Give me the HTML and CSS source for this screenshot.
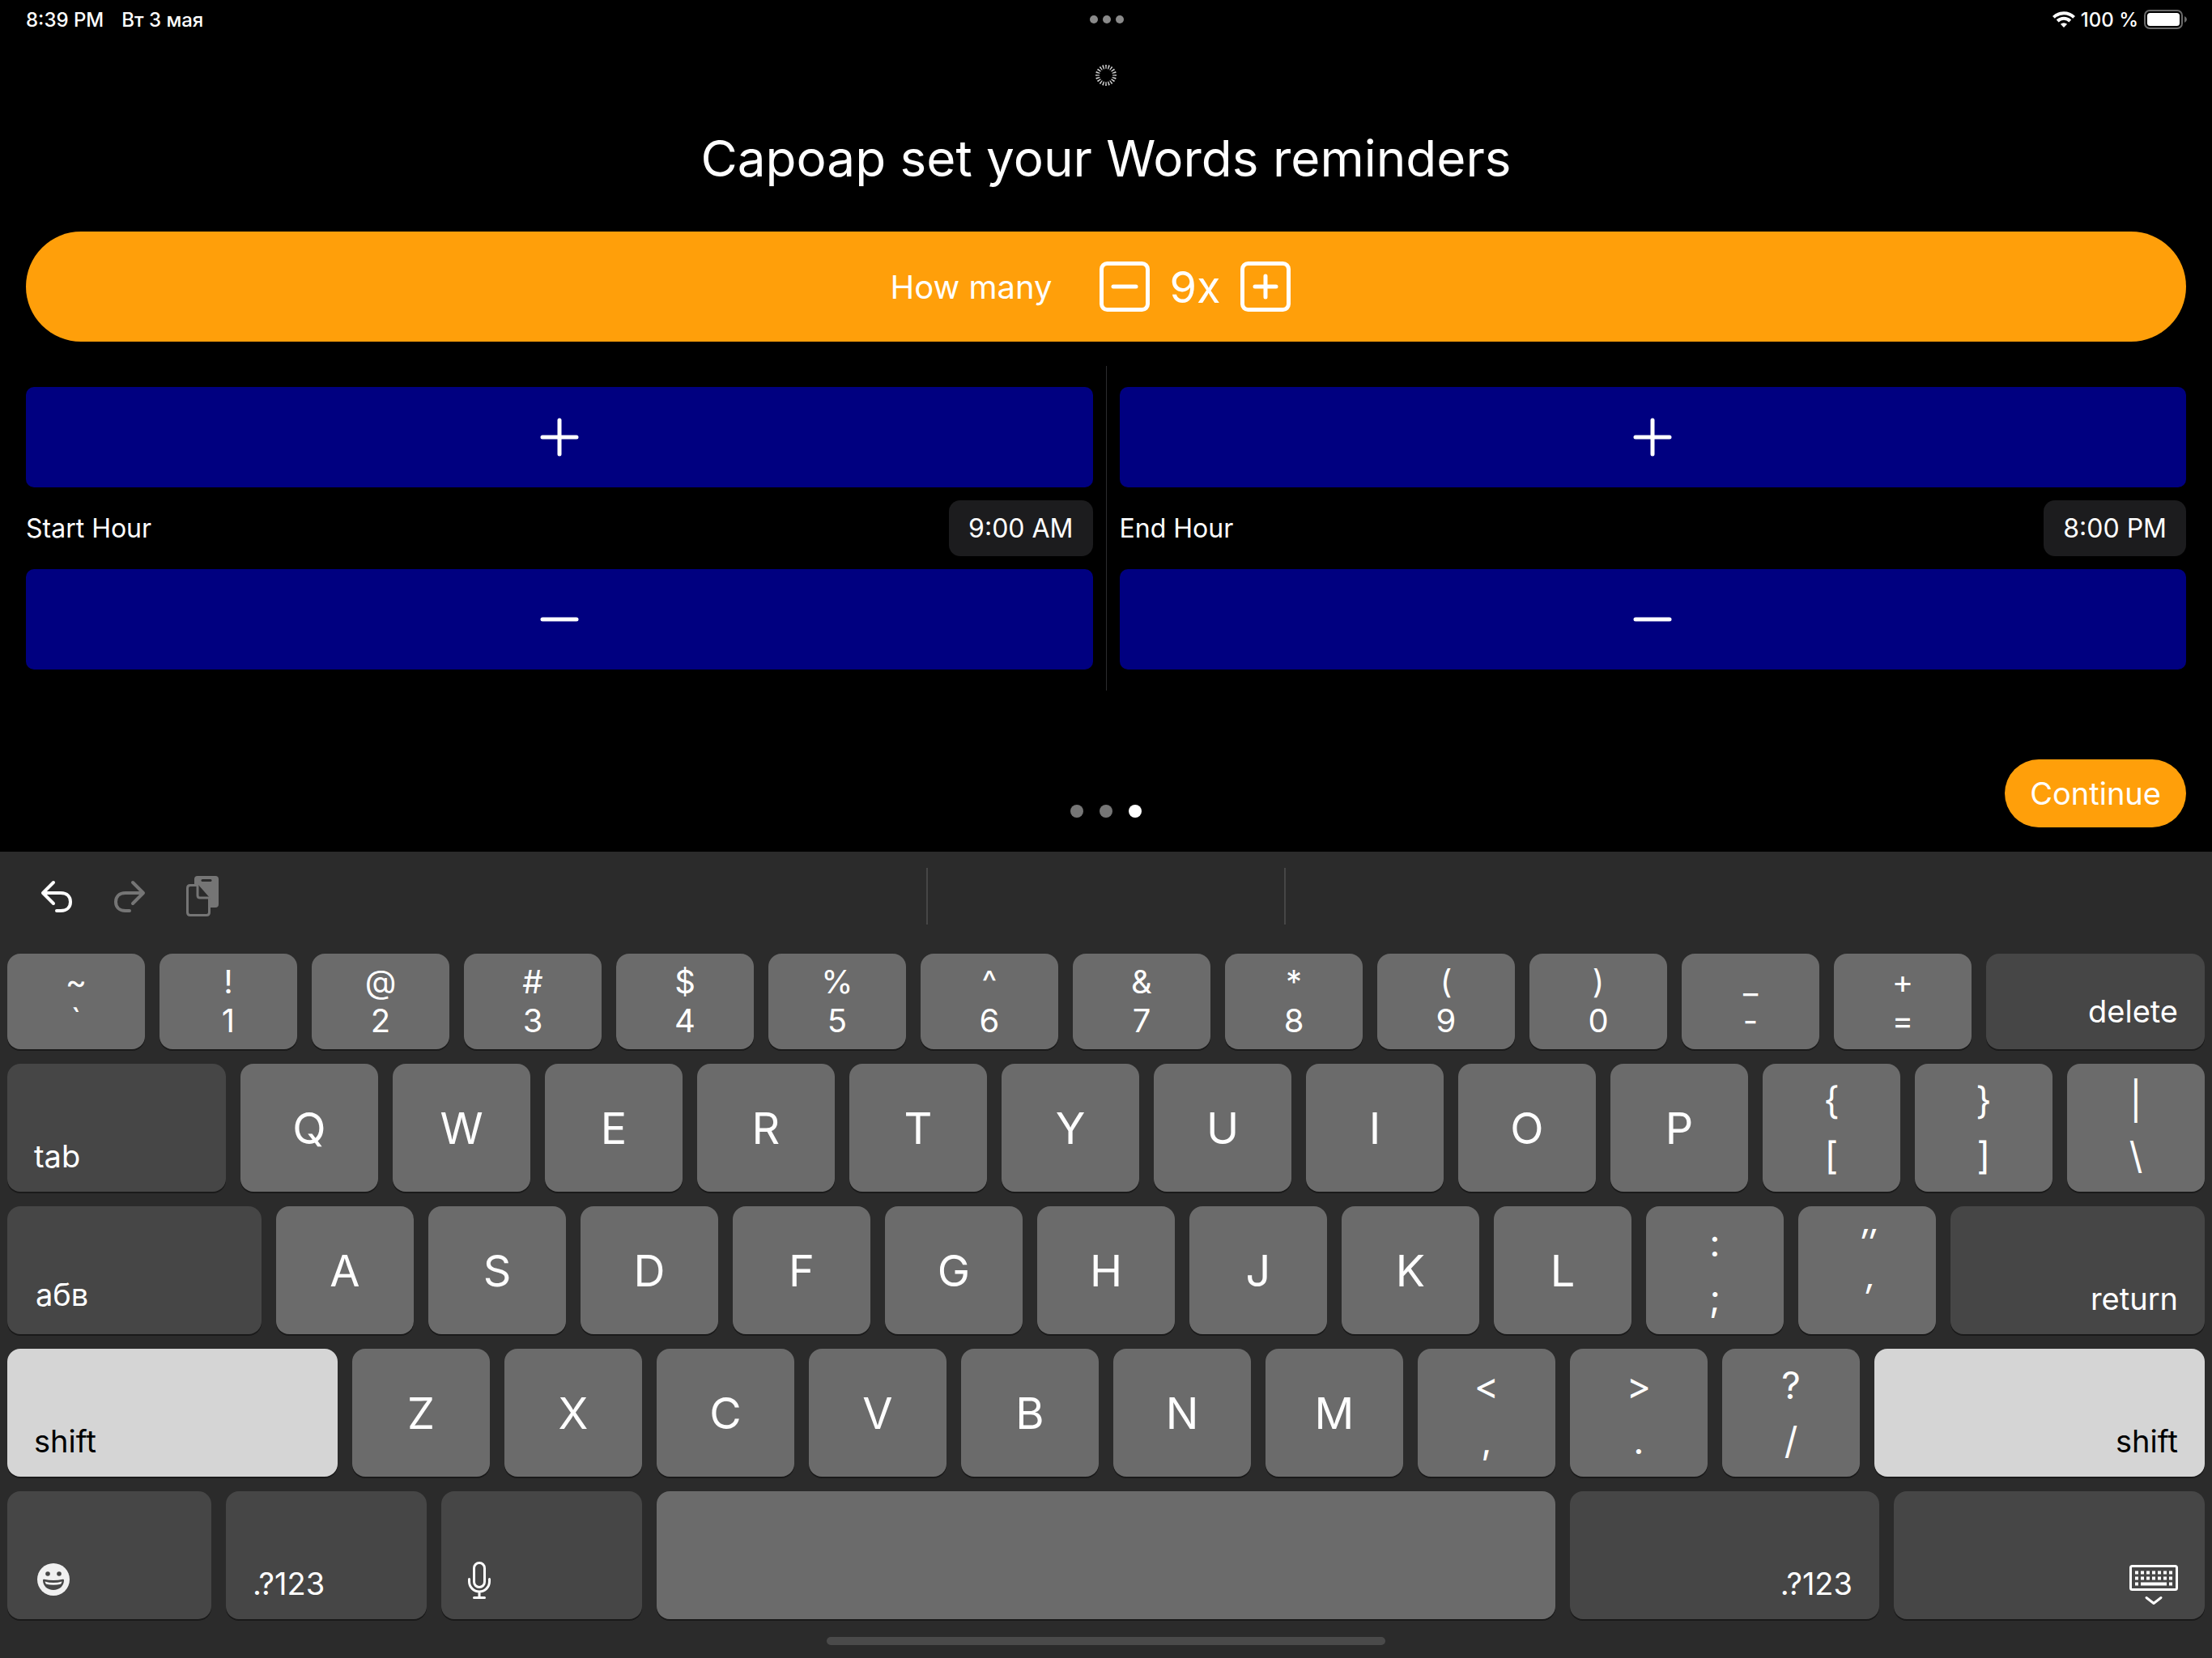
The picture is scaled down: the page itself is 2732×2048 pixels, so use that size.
FILE: index.html
```html
<!DOCTYPE html>
<html lang="en">
<head>
<meta charset="utf-8">
<title>Reminders</title>
<link rel="stylesheet" href="styles.css">
</head>
<body>
<svg class="sprite" aria-hidden="true">
  <symbol id="i-plus" viewBox="0 0 48 48"><path d="M24 3v42M3 24h42" fill="none" stroke="currentColor" stroke-width="5" stroke-linecap="round"/></symbol>
  <symbol id="i-minus" viewBox="0 0 48 48"><path d="M3 24h42" fill="none" stroke="currentColor" stroke-width="5" stroke-linecap="round"/></symbol>
</svg>
<div class="screen">
  <header class="status">
    <div class="status-left"><span>8:39 PM</span><span lang="ru">Вт 3 мая</span></div>
    <div class="multitask"><i></i><i></i><i></i></div>
    <div class="status-right">
      <svg class="wifi" viewBox="0 0 28 20" aria-label="Wi-Fi"><g fill="none" stroke="#fff" stroke-width="4"><path d="M1.4 7.4a18 18 0 0 1 25.200 0"/><path d="M6.200 12a11.200 11.200 0 0 1 15.600 0"/></g><path d="M9.900 15.800a6 6 0 0 1 8.200 0L14 20z" fill="#fff"/></svg>
      <span>100 %</span>
      <svg class="battery" viewBox="0 0 54 24" aria-label="Battery"><rect x="1" y="1" width="46" height="22" rx="6" fill="none" stroke="#6b6b6b" stroke-width="2"/><rect x="4" y="4" width="40" height="16" rx="3.500" fill="#fff"/><path d="M50 8q3 1.500 3 4t-3 4z" fill="#6b6b6b"/></svg>
    </div>
  </header>

  <main class="app">
    <svg class="spinner" viewBox="0 0 28 28" aria-label="Loading"><circle cx="14" cy="14" r="10.500" fill="none" stroke="#d0d0d0" stroke-width="5" pathLength="40" stroke-dasharray="0.900 1.100" stroke-dashoffset="0.450"/></svg>
    <h1>Capoap set your Words reminders</h1>

    <section class="count">
      <span class="count-label">How many</span>
      <button class="step" aria-label="Fewer"><svg viewBox="0 0 62 62"><rect x="2.500" y="2.500" width="57" height="57" rx="7"/><path d="M17 31h28"/></svg></button>
      <output class="count-value">9x</output>
      <button class="step" aria-label="More"><svg viewBox="0 0 62 62"><rect x="2.500" y="2.500" width="57" height="57" rx="7"/><path d="M18 31h26M31 18v26"/></svg></button>
    </section>

    <section class="hours">
      <div class="hour">
        <button class="bar" aria-label="Start later"><svg><use href="#i-plus"/></svg></button>
        <div class="hour-row"><span>Start Hour</span><button class="chip">9:00 AM</button></div>
        <button class="bar" aria-label="Start earlier"><svg><use href="#i-minus"/></svg></button>
      </div>
      <div class="hour">
        <button class="bar" aria-label="End later"><svg><use href="#i-plus"/></svg></button>
        <div class="hour-row"><span>End Hour</span><button class="chip">8:00 PM</button></div>
        <button class="bar" aria-label="End earlier"><svg><use href="#i-minus"/></svg></button>
      </div>
    </section>

    <footer class="pager">
      <div class="dots"><i></i><i></i><i class="on"></i></div>
      <button class="continue">Continue</button>
    </footer>
  </main>

  <section class="keyboard">
    <div class="tools">
      <div class="tools-side">
        <button class="tool" aria-label="Undo"><svg viewBox="0 0 40 40"><path d="M16 3L3 16l13 13M3.500 16H25c8 0 12 4.500 12 11s-4 11-12 11h-5"/></svg></button>
        <button class="tool dim" aria-label="Redo"><svg viewBox="0 0 40 40"><path d="M24 3l13 13-13 13M36.500 16H15C7 16 3 20.500 3 27s4 11 12 11h5"/></svg></button>
        <button class="tool dim" aria-label="Paste"><svg class="paste" viewBox="0 0 42 50"><path class="solid" d="M14 0h22q4 0 4 4v31q0 4-4 4h-6V28L15 11h-5V4q0-4 4-4z"/><path class="slot" d="M20 5.500h10"/><path d="M5 11.500h8M28.500 28V45q0 3.500-3.500 3.500H5q-3.500 0-3.500-3.500V15q0-3.500 3.500-3.500M14 12v12q0 3 3 3h12"/></svg></button>
      </div>
      <div class="tools-mid"></div>
      <div class="tools-side"></div>
    </div>

    <div class="keys">
      <div class="row row-digits">
        <button class="key dual"><span>~</span><span>`</span></button>
        <button class="key dual"><span>!</span><span>1</span></button>
        <button class="key dual"><span>@</span><span>2</span></button>
        <button class="key dual"><span>#</span><span>3</span></button>
        <button class="key dual"><span>$</span><span>4</span></button>
        <button class="key dual"><span>%</span><span>5</span></button>
        <button class="key dual"><span>^</span><span>6</span></button>
        <button class="key dual"><span>&amp;</span><span>7</span></button>
        <button class="key dual"><span>*</span><span>8</span></button>
        <button class="key dual"><span>(</span><span>9</span></button>
        <button class="key dual"><span>)</span><span>0</span></button>
        <button class="key dual"><span>_</span><span>-</span></button>
        <button class="key dual"><span>+</span><span>=</span></button>
        <button class="key mod end">delete</button>
      </div>
      <div class="row row-tab">
        <button class="key mod">tab</button>
        <button class="key">Q</button>
        <button class="key">W</button>
        <button class="key">E</button>
        <button class="key">R</button>
        <button class="key">T</button>
        <button class="key">Y</button>
        <button class="key">U</button>
        <button class="key">I</button>
        <button class="key">O</button>
        <button class="key">P</button>
        <button class="key dual"><span>{</span><span>[</span></button>
        <button class="key dual"><span>}</span><span>]</span></button>
        <button class="key dual"><span>|</span><span>\</span></button>
      </div>
      <div class="row row-home">
        <button class="key mod layout" lang="ru">абв</button>
        <button class="key">A</button>
        <button class="key">S</button>
        <button class="key">D</button>
        <button class="key">F</button>
        <button class="key">G</button>
        <button class="key">H</button>
        <button class="key">J</button>
        <button class="key">K</button>
        <button class="key">L</button>
        <button class="key dual"><span>:</span><span>;</span></button>
        <button class="key dual slant"><span>″</span><span>′</span></button>
        <button class="key mod end">return</button>
      </div>
      <div class="row row-shift">
        <button class="key mod held">shift</button>
        <button class="key">Z</button>
        <button class="key">X</button>
        <button class="key">C</button>
        <button class="key">V</button>
        <button class="key">B</button>
        <button class="key">N</button>
        <button class="key">M</button>
        <button class="key dual"><span>&lt;</span><span>,</span></button>
        <button class="key dual"><span>&gt;</span><span>.</span></button>
        <button class="key dual"><span>?</span><span>/</span></button>
        <button class="key mod held end">shift</button>
      </div>
      <div class="row row-space">
        <button class="key mod" aria-label="Emoji"><svg class="emoji" viewBox="0 0 40 40"><circle cx="20" cy="20" r="20" fill="#f0f0f0"/><g fill="#464646"><circle cx="13" cy="13" r="2.800"/><circle cx="27" cy="13" r="2.800"/><path d="M7 21q0-1.500 1.500-1.200 11.500 2.600 23 0Q33 19.500 33 21c0 7-5.500 12-13 12S7 28 7 21z"/></g><path d="M9.500 22.500q10.500 3 21 0-.3 2-1.500 3.200-9 2.300-18 0-1.200-1.200-1.500-3.200z" fill="#f0f0f0"/></svg></button>
        <button class="key mod">.?123</button>
        <button class="key mod" aria-label="Dictate"><svg class="mic" viewBox="0 0 28 46"><g fill="none" stroke="#fff" stroke-width="3" stroke-linecap="round"><rect x="7.500" y="1.500" width="13" height="30" rx="6.500"/><path d="M1.500 21.500v3a12.500 12.500 0 0 0 25 0v-3M14 37v7M7.500 44.500h13"/></g></svg></button>
        <button class="key" aria-label="Space"></button>
        <button class="key mod end">.?123</button>
        <button class="key mod end" aria-label="Hide keyboard"><svg class="hide" viewBox="0 0 60 50"><rect x="1.500" y="1.500" width="57" height="29" rx="2" fill="none" stroke="#fff" stroke-width="3"/><g stroke="#fff" stroke-width="4" fill="none"><path d="M7 9.500h46M7 16.500h46" stroke-dasharray="4 3"/><path d="M7 23.500h4M14 23.500h32M49 23.500h4"/></g><path d="M21 40.500l9 7 9-7" fill="none" stroke="#fff" stroke-width="3" stroke-linecap="round" stroke-linejoin="round"/></svg></button>
      </div>
    </div>
    <div class="home"></div>
  </section>
</div>
</body>
</html>
```

FILE: styles.css
```css
* { box-sizing: border-box; }

body {
  margin: 0;
  background: #000;
  color: #fff;
  font-family: Inter, "Liberation Sans", sans-serif;
}

button {
  margin: 0;
  padding: 0;
  border: 0;
  background: none;
  color: inherit;
  font: inherit;
}

svg { display: block; }

.sprite { position: absolute; width: 0; height: 0; }

.screen {
  display: flex;
  flex-direction: column;
  min-height: 100vh;
}

/* status bar */
.status {
  display: grid;
  grid-template-columns: 1fr auto 1fr;
  align-items: center;
  height: 48px;
  padding: 0 30px 0 32px;
  font-size: 24px;
  font-weight: 500;
}

.status-left { display: flex; gap: 22px; }

.multitask { display: flex; gap: 6px; }

.multitask i {
  width: 10px;
  height: 10px;
  border-radius: 50%;
  background: #8a8a8a;
}

.status-right {
  display: flex;
  justify-content: flex-end;
  align-items: center;
  gap: 7px;
}

.wifi { width: 28px; height: 20px; }
.battery { width: 54px; height: 24px; }

/* reminder settings */
.app {
  flex: 1;
  display: flex;
  flex-direction: column;
  padding: 31px 32px 30px;
}

.spinner { width: 28px; height: 28px; align-self: center; }

h1 {
  margin: 49px 0 50px;
  font-size: 62px;
  line-height: 80px;
  font-weight: 400;
  text-align: center;
}

.count {
  display: flex;
  justify-content: center;
  align-items: center;
  height: 136px;
  padding-right: 38px;
  border-radius: 68px;
  background: #ff9f0a;
}

.count-label { margin-right: 58px; font-size: 40px; }
.count-value { margin: 0 25px; font-size: 54px; }

.step svg {
  width: 62px;
  height: 62px;
  fill: none;
  stroke: #fff;
  stroke-width: 5;
  stroke-linecap: round;
}

.hours {
  display: flex;
  margin-top: 30px;
}

.hour {
  flex: 1;
  display: flex;
  flex-direction: column;
  gap: 16px;
  padding: 26px 0;
}

.hour:first-child { padding-right: 16px; }

.hour:last-child {
  padding-left: 16px;
  border-left: 1px solid #2c2c2e;
}

.bar {
  display: flex;
  justify-content: center;
  align-items: center;
  height: 124px;
  border-radius: 10px;
  background: #000080;
}

.bar svg { width: 48px; height: 48px; }

.hour-row {
  display: flex;
  justify-content: space-between;
  align-items: center;
  height: 69px;
  font-size: 32px;
}

.chip {
  height: 69px;
  padding: 0 24px;
  border-radius: 14px;
  background: #1c1c1e;
}

.pager {
  display: grid;
  grid-template-columns: 1fr auto 1fr;
  align-items: end;
  margin-top: auto;
}

.dots {
  grid-column: 2;
  display: flex;
  gap: 20px;
  margin-bottom: 12px;
}

.dots i {
  width: 16px;
  height: 16px;
  border-radius: 50%;
  background: #767676;
}

.dots .on { background: #fff; }

.continue {
  justify-self: end;
  height: 84px;
  padding: 0 31px;
  border-radius: 42px;
  background: #ff9f0a;
  font-size: 38px;
}

/* keyboard */
.keyboard { background: #2b2b2b; }

.tools {
  display: grid;
  grid-template-columns: 1144fr 444fr 1144fr;
  height: 126px;
  padding: 20px 0 36px;
}

.tools-side {
  display: flex;
  align-items: center;
  padding-left: 50px;
}

.tools-mid {
  border: solid #464646;
  border-width: 0 2px;
}

.tool { margin-right: 50px; }

.tool svg {
  width: 40px;
  height: 40px;
  fill: none;
  stroke: #fff;
  stroke-width: 4;
  stroke-linecap: round;
  stroke-linejoin: round;
}

.dim svg { stroke: #757575; }
.tool .paste { width: 42px; height: 50px; stroke-width: 3; }
.paste .solid { fill: #757575; stroke: none; }
.paste .slot { stroke: #2b2b2b; }

.keys {
  display: flex;
  flex-direction: column;
  gap: 18px;
  padding: 0 9px;
}

.row { display: grid; gap: 18px; height: 158px; }
.row-digits { grid-template-columns: repeat(13, 170fr) 270fr; height: 118px; }
.row-tab { grid-template-columns: 270fr repeat(13, 170fr); }
.row-home { grid-template-columns: 314fr repeat(11, 170fr) 314fr; }
.row-shift { grid-template-columns: 408fr repeat(10, 170fr) 408fr; }
.row-space { grid-template-columns: 252fr 248fr 248fr 1110fr 382fr 384fr; }

.key {
  min-width: 0;
  display: flex;
  justify-content: center;
  align-items: center;
  border-radius: 16px;
  background: #6b6b6b;
  box-shadow: 0 2px 0 #1a1a1a;
  font-size: 54px;
}

.dual {
  flex-direction: column;
  font-size: 46px;
  line-height: 68px;
}

.row-digits .dual { font-size: 40px; line-height: 48px; }

.slant { font-style: italic; }

.mod {
  justify-content: flex-start;
  align-items: flex-end;
  padding: 0 33px 21px;
  background: #464646;
  font-size: 38px;
}

.row-digits .mod { padding-bottom: 24px; }
.layout { padding: 0 35px 26px; }
.end { justify-content: flex-end; }
.held { background: #d5d5d5; color: #000; }

.emoji { width: 40px; height: 40px; margin: 0 4px 8px; }
.mic { width: 28px; height: 46px; margin-bottom: 4px; }
.hide { width: 60px; height: 50px; margin-bottom: -4px; }

.home {
  width: 690px;
  height: 10px;
  margin: 22px auto 16px;
  border-radius: 5px;
  background: #4a4a4a;
}
```
